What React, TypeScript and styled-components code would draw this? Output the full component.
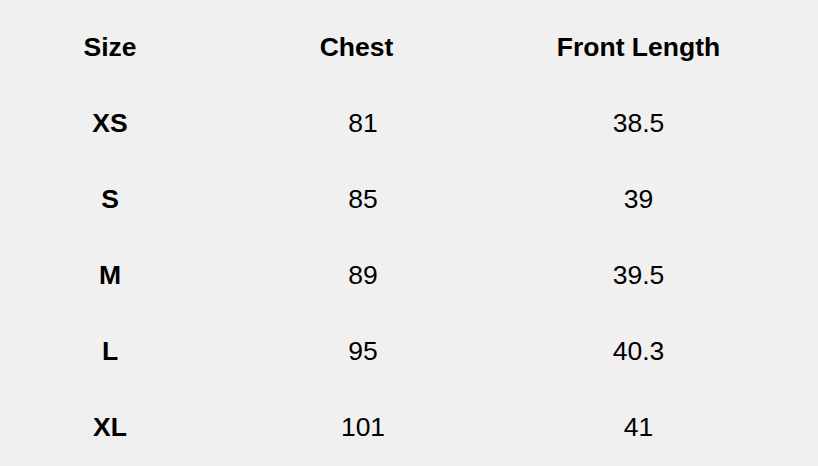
import React from "react";
import styled, { createGlobalStyle } from "styled-components";

const Global = createGlobalStyle`
  html, body {
    margin: 0;
    padding: 0;
    background: #f0f0f0;
  }
  body {
    font-family: "Liberation Sans", Arial, sans-serif;
    color: #000;
  }
`;

const Page = styled.div`
  width: 818px;
  height: 466px;
  background: #f0f0f0;
  padding-top: 9px;
  box-sizing: border-box;
  overflow: hidden;
`;

const Table = styled.div`
  display: grid;
  grid-template-columns: 220px 286px 265px;
  grid-auto-rows: 76px;
`;

const Cell = styled.div<{ $bold?: boolean; $nudge?: number }>`
  display: flex;
  align-items: center;
  justify-content: center;
  font-size: 26.5px;
  font-weight: ${(p) => (p.$bold ? 700 : 400)};
  padding-right: ${(p) => (p.$nudge ? p.$nudge : 0)}px;
  white-space: nowrap;
`;

const rows = [
  ["XS", "81", "38.5"],
  ["S", "85", "39"],
  ["M", "89", "39.5"],
  ["L", "95", "40.3"],
  ["XL", "101", "41"],
];

export default function App() {
  return (
    <>
      <Global />
      <Page>
        <Table>
          <Cell $bold>Size</Cell>
          <Cell $bold $nudge={13}>Chest</Cell>
          <Cell $bold>Front Length</Cell>
          {rows.map((r) => (
            <React.Fragment key={r[0]}>
              <Cell $bold>{r[0]}</Cell>
              <Cell>{r[1]}</Cell>
              <Cell>{r[2]}</Cell>
            </React.Fragment>
          ))}
        </Table>
      </Page>
    </>
  );
}
